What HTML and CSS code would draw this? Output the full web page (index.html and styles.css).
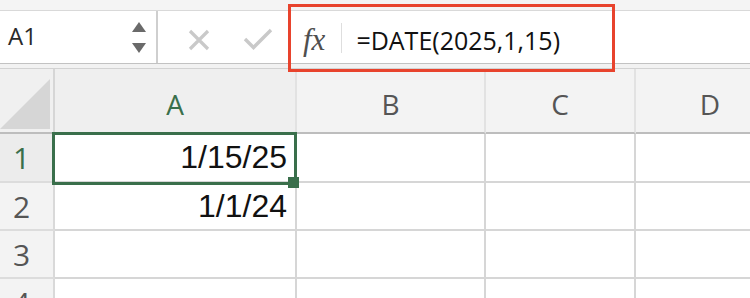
FILE: index.html
```html
<!DOCTYPE html>
<html>
<head>
<meta charset="utf-8">
<link rel="stylesheet" href="styles.css">
</head>
<body>
<div class="app">
  <div class="topstrip"></div>
  <div class="fbar">
    <div class="namebox">
      <span class="ref">A1</span>
      <span class="spin"><i class="up"></i><i class="down"></i></span>
    </div>
    <div class="actions">
      <svg class="ico-x" width="22" height="22" viewBox="0 0 22 22"><path d="M2 2 L20 20 M20 2 L2 20" stroke="#c9c9c9" stroke-width="3.2" fill="none" stroke-linecap="butt"/></svg>
      <svg class="ico-check" width="30" height="22" viewBox="0 0 30 22"><path d="M2 11 L10.5 19.5 L28 2" stroke="#c9c9c9" stroke-width="3.4" fill="none" stroke-linejoin="miter"/></svg>
    </div>
    <div class="formula">
      <span class="fx">fx</span>
      <span class="sep"></span>
      <span class="ftext">=DATE(2025,1,15)</span>
    </div>
    <div class="highlight"></div>
  </div>
  <div class="gap"></div>
  <div class="sheet">
    <div class="corner"></div>
    <div class="colhead sel">A</div>
    <div class="colhead">B</div>
    <div class="colhead">C</div>
    <div class="colhead">D</div>

    <div class="rowhead sel r1">1</div>
    <div class="cell r1">1/15/25</div>
    <div class="cell r1"></div>
    <div class="cell r1"></div>
    <div class="cell r1"></div>

    <div class="rowhead">2</div>
    <div class="cell">1/1/24</div>
    <div class="cell"></div>
    <div class="cell"></div>
    <div class="cell"></div>

    <div class="rowhead">3</div>
    <div class="cell"></div>
    <div class="cell"></div>
    <div class="cell"></div>
    <div class="cell"></div>

    <div class="rowhead">4</div>
    <div class="cell"></div>
    <div class="cell"></div>
    <div class="cell"></div>
    <div class="cell"></div>

    <div class="selection"><span class="handle"></span></div>
  </div>
</div>
</body>
</html>
```

FILE: styles.css
```css
* { box-sizing: border-box; }
html, body { margin: 0; padding: 0; }
body {
  width: 750px;
  height: 298px;
  overflow: hidden;
  background: #ffffff;
  font-family: "Open Sans", "Liberation Sans", sans-serif;
}
.app {
  position: relative;
  width: 750px;
  height: 298px;
  overflow: hidden;
}
.topstrip {
  height: 11px;
  background: #f4f4f4;
  border-bottom: 1px solid #d9d9d9;
}
.fbar {
  display: flex;
  height: 53px;
  background: #ffffff;
  border-bottom: 1px solid #c2c2c2;
}
.namebox {
  width: 158px;
  display: flex;
  align-items: center;
  justify-content: space-between;
  padding: 0 10px 0 8px;
  border-right: 2px solid #cfcfcf;
}
.ref {
  font-size: 24px;
  color: #2a2a2a;
  line-height: 1;
  margin-top: -2px;
}
.spin {
  display: flex;
  flex-direction: column;
  gap: 11px;
}
.spin i {
  display: block;
  width: 0;
  height: 0;
  border-left: 7px solid transparent;
  border-right: 7px solid transparent;
}
.spin .up { border-bottom: 10px solid #6a6a6a; }
.spin .down { border-top: 10px solid #6a6a6a; }
.actions {
  width: 130px;
  display: flex;
  align-items: center;
  padding-left: 30px;
  gap: 33px;
}
.ico-x { margin-top: 5px; }
.ico-check { margin-top: 3px; }
.formula {
  flex: 1;
  display: flex;
  align-items: center;
  padding-left: 15px;
  padding-top: 10px;
}
.fx {
  font-family: "Liberation Serif", "DejaVu Serif", serif;
  font-style: italic;
  font-size: 31px;
  color: #4f4f4f;
  line-height: 1;
  margin-top: -6px;
}
.sep {
  width: 1px;
  height: 30px;
  background: #dedede;
  margin: -8px 14px 0 16px;
}
.ftext {
  font-size: 25px;
  color: #111111;
  line-height: 1;
  margin-top: -4px;
}
.highlight {
  position: absolute;
  z-index: 5;
  left: 288px;
  top: 4px;
  width: 327px;
  height: 68px;
  border: 3px solid #e8432d;
}
.gap {
  height: 5px;
  background: #f2f2f2;
  border-bottom: 1px solid #d2d2d2;
}
.sheet {
  position: relative;
  display: grid;
  grid-template-columns: 55px 242px 189px 150px 150px;
  grid-template-rows: 65px 49px 48px 48px 48px;
}
.corner {
  position: relative;
  background: #f0f0f0;
  border-right: 2px solid #d6d6d6;
  border-bottom: 2px solid #bdbdbd;
}
.corner::after {
  content: "";
  position: absolute;
  right: 3px;
  bottom: 3px;
  width: 50px;
  height: 50px;
  background: #d6d6d6;
  clip-path: polygon(100% 0, 100% 100%, 0 100%);
}
.colhead {
  display: flex;
  align-items: center;
  justify-content: center;
  background: #f3f3f3;
  border-right: 2px solid #e2e2e2;
  border-bottom: 2px solid #bdbdbd;
  font-size: 28px;
  color: #555555;
  padding-top: 6px;
}
.colhead.sel { color: #3a6f4b; background: #efefef; }
.rowhead {
  display: flex;
  align-items: center;
  justify-content: center;
  padding-right: 10px;
  background: #f3f3f3;
  border-right: 2px solid #d9d9d9;
  border-bottom: 2px solid #dcdcdc;
  font-size: 30px;
  color: #555555;
}
.rowhead.sel { color: #3a6f4b; background: #ececec; }
.cell {
  display: flex;
  align-items: center;
  justify-content: flex-end;
  padding-right: 8px;
  border-right: 2px solid #d6d6d6;
  border-bottom: 2px solid #d6d6d6;
  font-family: "Liberation Sans", Arial, sans-serif;
  font-size: 32px;
  color: #111111;
}
.selection {
  position: absolute;
  left: 52px;
  top: 63px;
  width: 245px;
  height: 53px;
  border: 3px solid #3a6f4b;
}
.handle {
  position: absolute;
  right: -5px;
  bottom: -6px;
  width: 11px;
  height: 11px;
  background: #3a6f4b;
}
```
